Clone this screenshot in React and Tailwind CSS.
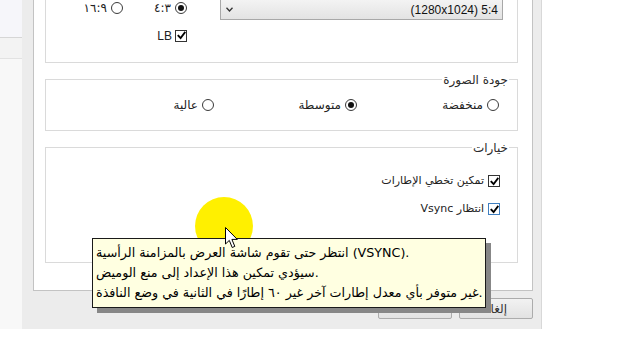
import React from "react";

const AR = "font-['DejaVu_Sans',sans-serif]";

function Radio({ checked }) {
  return (
    <span className="flex h-[12px] w-[12px] shrink-0 items-center justify-center rounded-full border border-[#3a3a3a] bg-white">
      {checked ? <span className="h-[6px] w-[6px] rounded-full bg-[#111]" /> : null}
    </span>
  );
}

function Check({ blue }) {
  return (
    <span
      className={
        blue
          ? "flex h-[12px] w-[12px] shrink-0 items-center justify-center border border-[#3f7fc0] bg-white"
          : "flex h-[12px] w-[12px] shrink-0 items-center justify-center border border-[#333] bg-white"
      }
    >
      <svg viewBox="0 0 10 10" width="9" height="9">
        <path d="M1.5 5.2 L4 7.8 L8.6 1.8" stroke="#000" strokeWidth="2" fill="none" strokeLinecap="square" />
      </svg>
    </span>
  );
}

function RadioItem({ label, checked, w }) {
  return (
    <div className={`flex items-center justify-end gap-[4px] ${w}`}>
      <span dir="rtl" className={`${AR} text-[12px] leading-[14px] text-[#222] whitespace-nowrap`}>{label}</span>
      <Radio checked={checked} />
    </div>
  );
}

export default function App() {
  return (
    <div className="relative h-[360px] w-[640px] overflow-hidden bg-white">
      <div className="flex h-[329px]">
        {/* left strip */}
        <div className="flex w-[22px] flex-col">
          <div className="h-[38px] border-b border-[#d6d6d6] bg-[#f6f6fa]" />
          <div className="h-[21px] border-b border-[#e2e2e2] bg-[#f3f3f3]" />
          <div className="flex-1 bg-[#f8f8f8]" />
        </div>

        {/* dialog */}
        <div className="flex w-[520px] flex-col border-r border-[#d8d8d8] bg-[#ececec] pl-[11px] pr-[8px]">
          {/* panel */}
          <div className="flex h-[291px] flex-col border border-t-0 border-[#c3c3c3] bg-white pl-[11px] pr-[14px]">
            {/* group 1 */}
            <div className="flex h-[63px] border border-t-0 border-[#dadada] pl-[38px] pr-[14px]">
              <div className="flex w-[103px] flex-col">
                <div className="mt-[1px] flex h-[13px] items-center">
                  <RadioItem label="١٦:٩" w="w-[39px]" />
                  <RadioItem label="٤:٣" checked w="w-[64px]" />
                </div>
                <div className="mt-[15px] flex h-[13px] items-center justify-end gap-[3px]">
                  <span className="font-['Liberation_Sans',sans-serif] text-[12px] leading-[14px] text-[#222]">LB</span>
                  <Check />
                </div>
              </div>
              <div className="ml-[33px] flex h-[20px] w-[283px] items-center justify-between border border-t-0 border-[#a8a8a8] bg-gradient-to-b from-[#f3f3f3] to-[#e3e3e3] pl-[5px] pr-[4px]">
                <svg width="7" height="5" viewBox="0 0 7 5">
                  <path d="M0.5 0.8 L3.5 4 L6.5 0.8" stroke="#333" strokeWidth="1.3" fill="none" />
                </svg>
                <span dir="ltr" className="font-['Liberation_Sans',sans-serif] text-[12px] leading-[14px] text-[#111]">
                  (1280x1024) 5:4
                </span>
              </div>
            </div>

            {/* group 2 */}
            <div className="relative mt-[16px] flex h-[52px] items-center border border-[#dadada] pl-[100px]">
              <span dir="rtl" className={`${AR} absolute -top-[7px] right-[8px] bg-white px-[1px] text-[12px] leading-[14px] text-[#2b2b2b]`}>
                جودة الصورة
              </span>
              <RadioItem label="عالية" w="w-[68px]" />
              <RadioItem label="متوسطة" checked w="w-[143px]" />
              <RadioItem label="منخفضة" w="w-[142px]" />
            </div>

            {/* group 3 */}
            <div className="relative mt-[16px] flex h-[116px] flex-col items-end border border-[#dadada] pr-[17px]">
              <span dir="rtl" className={`${AR} absolute -top-[7px] right-[8px] bg-white px-[1px] text-[12px] leading-[14px] text-[#2b2b2b]`}>
                خيارات
              </span>
              <div className="mt-[27px] flex h-[12px] items-center gap-[4px]">
                <span dir="rtl" className={`${AR} text-[11px] leading-[14px] text-[#222] whitespace-nowrap`}>تمكين تخطي الإطارات</span>
                <Check />
              </div>
              <div className="mt-[16px] flex h-[12px] items-center gap-[4px]">
                <span dir="rtl" className={`${AR} text-[11px] leading-[14px] text-[#222] whitespace-nowrap`}>انتظار Vsync</span>
                <Check blue />
              </div>
            </div>
          </div>

          {/* buttons */}
          <div className="mt-[7px] flex justify-end gap-[7px]">
            <div className="flex h-[21px] w-[74px] items-center justify-center rounded-[2px] border border-[#acacac] bg-gradient-to-b from-[#f2f2f2] to-[#e2e2e2] font-['Liberation_Sans',sans-serif] text-[12px] text-[#333]">
              OK
            </div>
            <div dir="rtl" className={`${AR} flex h-[21px] w-[74px] items-center justify-center rounded-[2px] border border-[#acacac] bg-gradient-to-b from-[#f2f2f2] to-[#e2e2e2] text-[12px] text-[#333]`}>
              إلغاء
            </div>
          </div>
        </div>

        <div className="flex-1 bg-white" />
      </div>

      {/* cursor highlight */}
      <div className="absolute left-[195px] top-[197px] h-[58px] w-[58px] rounded-full bg-[#fff000] blur-[0.5px]" />

      {/* tooltip */}
      <div
        dir="ltr"
        className={`${AR} absolute left-[92px] top-[238px] h-[70px] w-[394px] border border-[#1a1a1a] bg-[#ffffe1] pl-[3px] pt-[4px] text-[12.7px] leading-[20px] text-black shadow-[5px_5px_0_#878787]`}
      >
        <div className="whitespace-nowrap">انتظر حتى تقوم شاشة العرض بالمزامنة الرأسية (VSYNC).</div>
        <div className="whitespace-nowrap">سيؤدي تمكين هذا الإعداد إلى منع الوميض.</div>
        <div className="whitespace-nowrap">غير متوفر بأي معدل إطارات آخر غير ٦٠ إطارًا في الثانية في وضع النافذة.</div>
      </div>

      {/* mouse cursor */}
      <svg className="absolute left-[225px] top-[227px]" width="14" height="22" viewBox="0 0 14 22">
        <path d="M0.5 0.5 L0.5 17 L4.3 13.4 L7.2 20.5 L9.8 19.4 L6.9 12.4 L12.3 12.4 Z" fill="#fff" stroke="#000" strokeWidth="1" strokeLinejoin="round" />
      </svg>
    </div>
  );
}
